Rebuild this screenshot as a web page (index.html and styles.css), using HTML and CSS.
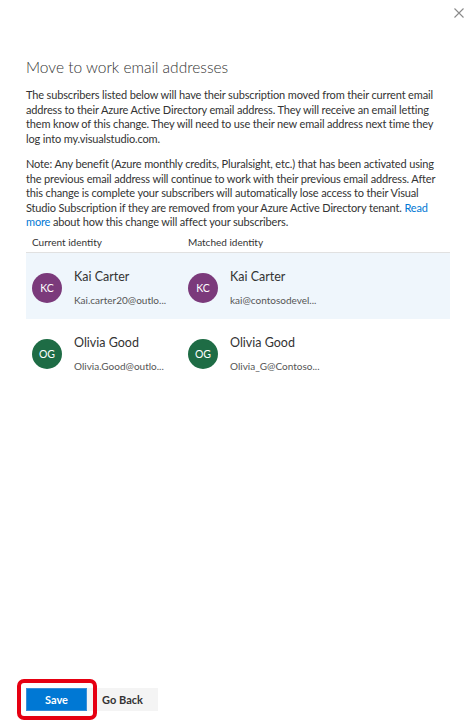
FILE: index.html
```html
<!DOCTYPE html>
<html lang="en">
<head>
<meta charset="utf-8">
<title>Move to work email addresses</title>
<link rel="stylesheet" href="styles.css">
</head>
<body>
<div class="panel">
  <div class="topbar">
    <button class="close" aria-label="Close">
      <svg width="10" height="10" viewBox="0 0 10 10"><path d="M0.5 0.5L9.5 9.5M9.5 0.5L0.5 9.5" stroke="#8a8a8a" stroke-width="1.1" fill="none"/></svg>
    </button>
  </div>
  <h1 class="title">Move to work email addresses</h1>
  <p class="text">The subscribers listed below will have their subscription moved from their current email<br>address to their Azure Active Directory email address. They will receive an email letting<br>them know of this change. They will need to use their new email address next time they<br>log into my.visualstudio.com.</p>
  <p class="text note">Note: Any benefit (Azure monthly credits, Pluralsight, etc.) that has been activated using<br>the previous email address will continue to work with their previous email address. After<br>this change is complete your subscribers will automatically lose access to their Visual<br>Studio Subscription if they are removed from your Azure Active Directory tenant. <a class="link" href="#">Read<br>more</a> about how this change will affect your subscribers.</p>
  <div class="table">
    <div class="row head">
      <div class="cell">Current identity</div>
      <div class="cell">Matched identity</div>
    </div>
    <div class="row item selected">
      <div class="cell person">
        <span class="avatar purple">KC</span>
        <div class="info"><div class="name">Kai Carter</div><div class="email">Kai.carter20@outlo...</div></div>
      </div>
      <div class="cell person">
        <span class="avatar purple">KC</span>
        <div class="info"><div class="name">Kai Carter</div><div class="email">kai@contosodevel...</div></div>
      </div>
    </div>
    <div class="row item">
      <div class="cell person">
        <span class="avatar green">OG</span>
        <div class="info"><div class="name">Olivia Good</div><div class="email">Olivia.Good@outlo...</div></div>
      </div>
      <div class="cell person">
        <span class="avatar green">OG</span>
        <div class="info"><div class="name">Olivia Good</div><div class="email">Olivia_G@Contoso...</div></div>
      </div>
    </div>
  </div>
  <div class="footer">
    <div class="save-wrap">
      <button class="btn primary">Save</button>
      <span class="highlight"></span>
    </div>
    <button class="btn secondary">Go Back</button>
  </div>
</div>
</body>
</html>
```
FILE: styles.css
```css
* { box-sizing: border-box; }
html, body { margin: 0; padding: 0; background: #fff; }
body {
  font-family: Lato, "Open Sans", sans-serif;
  color: #333;
}
.panel {
  height: 721px;
  display: flex;
  flex-direction: column;
  padding: 0 22px 0 26px;
  overflow: hidden;
}
.topbar {
  display: flex;
  justify-content: flex-end;
  margin-right: -14px;
  padding-top: 8px;
  height: 26px;
}
.close {
  border: 0;
  background: none;
  padding: 0;
  width: 10px;
  height: 10px;
  display: block;
}
.close svg { display: block; }
.title {
  margin: 29px 0 0;
  font-size: 15.5px;
  font-weight: 300;
  line-height: 24px;
  color: #333;
}
.text {
  margin: 9px 0 0;
  font-size: 11px;
  line-height: 14.5px;
  color: #333;
  letter-spacing: -0.15px;
  white-space: nowrap;
}
.note { margin-top: 11px; }
.link { color: #0078d4; text-decoration: none; }
.table { margin-top: 2px; }
.row {
  display: grid;
  grid-template-columns: 156px 1fr;
}
.head {
  height: 21px;
  padding-top: 3px;
  border-bottom: 1px solid #e1e1e1;
  font-size: 10px;
  line-height: 14px;
  color: #333;
}
.cell { padding-left: 6px; }
.item { height: 66px; padding-top: 4px; }
.selected { background: #eff6fc; }
.person {
  display: flex;
  align-items: center;
  gap: 12px;
}
.avatar {
  width: 30px;
  height: 30px;
  border-radius: 50%;
  flex: none;
  display: flex;
  align-items: center;
  justify-content: center;
  color: #fff;
  font-size: 10.5px;
}
.purple { background: #7b3a7b; }
.green { background: #1e6c45; }
.info {
  display: flex;
  flex-direction: column;
  gap: 9px;
}
.name {
  font-size: 12.5px;
  line-height: 17px;
  color: #333;
}
.email {
  font-size: 10px;
  line-height: 13px;
  color: #555;
}
.footer {
  margin-top: auto;
  margin-bottom: 10px;
  display: flex;
  align-items: stretch;
}
.save-wrap { position: relative; display: flex; }
.btn {
  font-family: Lato, "Open Sans", sans-serif;
  font-size: 11px;
  font-weight: 700;
  height: 23px;
  padding: 0;
  border: 0;
}
.primary {
  width: 61px;
  background: #0078d4;
  color: #fff;
  border: 1px solid #3a8fd8;
}
.secondary {
  width: 71px;
  background: #f4f4f4;
  color: #333;
}
.highlight {
  position: absolute;
  left: -9px;
  top: -9px;
  width: 80px;
  height: 41px;
  border: 4px solid #e60012;
  border-radius: 7px;
  pointer-events: none;
}
```
